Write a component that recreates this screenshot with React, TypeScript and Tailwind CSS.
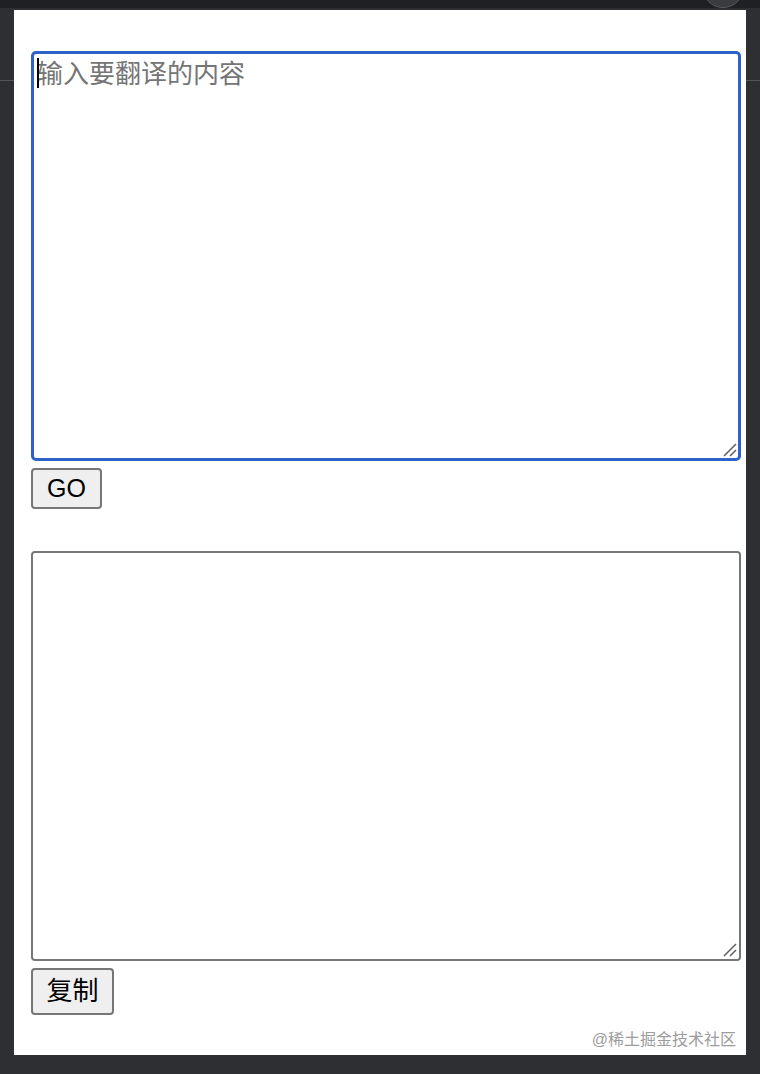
function Grip() {
  return (
    <svg
      className="pointer-events-none absolute bottom-[4px] right-[4px]"
      width="14"
      height="14"
      viewBox="0 0 14 14"
    >
      <path d="M1 13L13 1M7 13L13 7" stroke="#5f5f5f" strokeWidth="1.5" fill="none" />
    </svg>
  );
}

export default function App() {
  return (
    <div className="relative flex min-h-[1074px] flex-col overflow-hidden bg-[#2e2f32] font-['Liberation_Sans','Noto_Sans_CJK_SC',sans-serif]">
      {/* window chrome */}
      <div className="relative h-[8px] bg-[#1f2023]">
        <div className="absolute right-[16px] top-[-34px] h-[42px] w-[42px] rounded-full border border-[#55565a] bg-[#3a3b3e]" />
      </div>
      <div className="absolute left-0 top-[80px] h-px w-[14px] bg-[#55565a]" />
      <div className="absolute right-0 top-[80px] h-px w-[14px] bg-[#55565a]" />

      <div className="relative mx-[14px] mt-[2px] flex h-[1045px] flex-col items-start bg-white pl-[17px] pr-[5px] pt-[41px]">
        <div className="relative w-full">
          <textarea
            placeholder="输入要翻译的内容"
            className="block h-[410px] w-full resize-none rounded-[5px] border-[3px] border-[#2d62c9] px-[3px] pb-[3px] pt-[5px] text-[26px] leading-[30px] text-black outline-none placeholder:text-[#757575]"
          />
          <div className="absolute left-[6px] top-[7px] h-[30px] w-[2px] bg-black" />
          <Grip />
        </div>
        <button className="mt-[7px] flex h-[41px] w-[71px] items-center justify-center rounded-[4px] border-2 border-[#767676] bg-[#efefef] text-[25px] text-black">
          GO
        </button>

        <div className="relative mt-[42px] w-full">
          <textarea className="block h-[410px] w-full resize-none rounded-[4px] border-2 border-[#767676] p-[4px] text-[26px] leading-[30px] text-black outline-none" />
          <Grip />
        </div>
        <button className="mt-[7px] flex h-[47px] w-[83px] items-center justify-center rounded-[4px] border-2 border-[#767676] bg-[#efefef] text-[26px] text-black">
          复制
        </button>

        <div className="mt-auto self-end pb-[6px] pr-[5px] text-[16px] leading-[18px] text-[#9c9c9c]">
          @稀土掘金技术社区
        </div>
      </div>
    </div>
  );
}
